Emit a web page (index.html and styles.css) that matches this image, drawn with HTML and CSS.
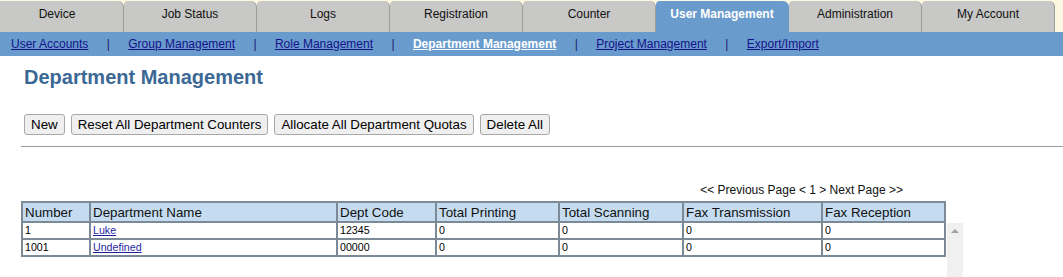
FILE: index.html
```html
<!DOCTYPE html>
<html>
<head>
<meta charset="utf-8">
<link rel="stylesheet" href="styles.css">
</head>
<body>
<div class="topbar">
  <div class="tabs">
    <div class="tab">Device</div>
    <div class="tab">Job Status</div>
    <div class="tab">Logs</div>
    <div class="tab">Registration</div>
    <div class="tab">Counter</div>
    <div class="tab active">User Management</div>
    <div class="tab">Administration</div>
    <div class="tab">My Account</div>
  </div>
</div>
<div class="subnav">
  <a href="#">User Accounts</a><span class="sep">|</span>
  <a href="#">Group Management</a><span class="sep">|</span>
  <a href="#">Role Management</a><span class="sep">|</span>
  <a href="#" class="current">Department Management</a><span class="sep">|</span>
  <a href="#">Project Management</a><span class="sep">|</span>
  <a href="#">Export/Import</a>
</div>
<div class="content">
  <h1 class="title">Department Management</h1>
  <div class="actions">
    <button class="btn">New</button>
    <button class="btn">Reset All Department Counters</button>
    <button class="btn">Allocate All Department Quotas</button>
    <button class="btn">Delete All</button>
  </div>
  <div class="rule"></div>
  <div class="pager">&lt;&lt; Previous Page &lt; 1 &gt; Next Page &gt;&gt;</div>
  <table class="grid head">
    <colgroup><col class="c1"><col class="c2"><col class="c3"><col class="c4"><col class="c5"><col class="c6"><col class="c7"></colgroup>
    <tr>
      <th>Number</th><th>Department Name</th><th>Dept Code</th><th>Total Printing</th><th>Total Scanning</th><th>Fax Transmission</th><th>Fax Reception</th>
    </tr>
  </table>
  <div class="bodywrap">
    <table class="grid body">
      <colgroup><col class="c1"><col class="c2"><col class="c3"><col class="c4"><col class="c5"><col class="c6"><col class="c7"></colgroup>
      <tr><td>1</td><td><a href="#">Luke</a></td><td>12345</td><td>0</td><td>0</td><td>0</td><td>0</td></tr>
      <tr><td>1001</td><td><a href="#">Undefined</a></td><td>00000</td><td>0</td><td>0</td><td>0</td><td>0</td></tr>
    </table>
    <div class="scrollbar"><div class="arrow"></div></div>
  </div>
</div>
</body>
</html>
```

FILE: styles.css
```css
html, body {
  margin: 0;
  padding: 0;
  background: #ffffff;
  font-family: "Liberation Sans", Arial, sans-serif;
  overflow: hidden;
}

.topbar {
  background: #fcf8e2;
  height: 32px;
  padding-top: 1px;
  box-sizing: border-box;
  overflow: hidden;
}

.tabs {
  display: flex;
  margin-left: -9px;
}

.tab {
  width: 133px;
  flex: none;
  height: 31px;
  box-sizing: border-box;
  background: #c8c8c6;
  border-right: 1px solid #9c9c9a;
  border-radius: 4px 6px 0 0;
  text-align: center;
  font-size: 12px;
  line-height: 14px;
  padding-top: 6px;
  color: #111;
}

.tab.active {
  background: #6a9bcd;
  color: #ffffff;
  font-weight: bold;
  border-right-color: #6a9bcd;
}

.subnav {
  display: flex;
  background: #6a9bcd;
  height: 24px;
  line-height: 24px;
  font-size: 12px;
  padding-left: 11px;
  color: #1b1b6e;
  white-space: nowrap;
}

.subnav a,
.subnav a:visited {
  color: #14148a;
  text-decoration: underline;
}

.subnav a.current,
.subnav a.current:visited {
  color: #ffffff;
  font-weight: bold;
}

.subnav .sep {
  margin: 0 18.4px;
  color: #1b1b6e;
}

.content {
  padding-left: 21px;
}

.title {
  margin: 10px 0 0 3px;
  font-size: 20px;
  line-height: 23px;
  font-weight: bold;
  color: #3b6894;
}

.actions {
  display: flex;
  gap: 6px;
  margin: 25px 0 0 3px;
}

.btn {
  font-family: "Liberation Sans", Arial, sans-serif;
  font-size: 13.33px;
  height: 21px;
  line-height: 17px;
  padding: 0 6px;
  border: 1px solid #a8a8a8;
  border-radius: 3px;
  background: #efefef;
  color: #000;
}

.rule {
  margin-top: 11px;
  border-top: 1px solid #9a9a9a;
}

.pager {
  width: 882px;
  text-align: right;
  font-size: 12px;
  line-height: 14px;
  margin-top: 36px;
  color: #111;
}

.grid {
  border-collapse: collapse;
  table-layout: fixed;
  width: 923px;
}

.grid.head {
  margin-top: 4px;
}

.c1 { width: 68px; }
.c2 { width: 247px; }
.c3 { width: 99px; }
.c4 { width: 123px; }
.c5 { width: 124px; }
.c6 { width: 139px; }
.c7 { width: 123px; }

.grid th, .grid td {
  border: 2px solid #7c8996;
  text-align: left;
  white-space: nowrap;
  overflow: hidden;
}

.grid th {
  background: #c5dcf0;
  font-weight: normal;
  font-size: 13.33px;
  line-height: 15px;
  padding: 2px 2px 1px;
  color: #111;
}

.grid.body tr:first-child td {
  border-top: none;
}

.grid td {
  font-size: 10.67px;
  line-height: 13px;
  padding: 1px 2px 1px;
  color: #000;
}

.grid td a,
.grid td a:visited {
  color: #1f1f9e;
}

.bodywrap {
  display: flex;
  align-items: flex-start;
  gap: 1px;
}

.scrollbar {
  width: 16px;
  height: 60px;
  background: #f0f0f0;
  position: relative;
}

.arrow {
  position: absolute;
  left: 4px;
  top: 6px;
  width: 0;
  height: 0;
  border-left: 4px solid transparent;
  border-right: 4px solid transparent;
  border-bottom: 4px solid #a3a3a3;
}
```
